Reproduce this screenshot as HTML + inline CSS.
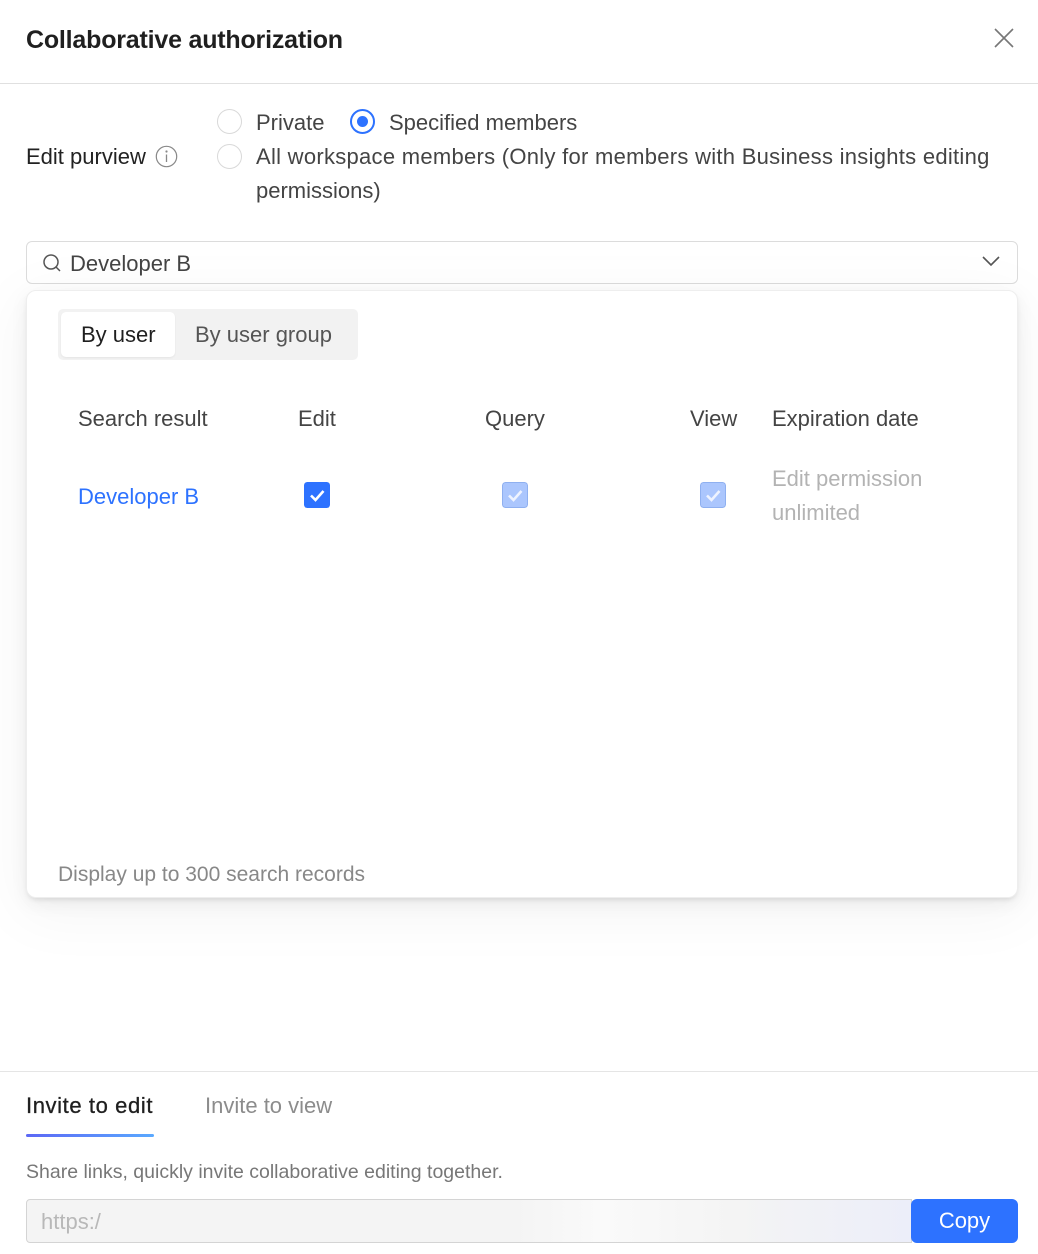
<!DOCTYPE html>
<html><head><meta charset="utf-8">
<style>
*{box-sizing:border-box;margin:0;padding:0}
body{width:1038px;height:1254px;background:#fff;font-family:"Liberation Sans",Arial,sans-serif;color:#333;position:relative;overflow:hidden}
.a{position:absolute;white-space:nowrap}
.t20{font-size:22px;line-height:24px}
.radio{position:absolute;width:25px;height:25px;border:1px solid #d9d9d9;border-radius:50%;background:#fff}
.radio.on{border:2px solid #2d72ff}
.radio.on::after{content:"";position:absolute;left:5px;top:5px;width:11px;height:11px;border-radius:50%;background:#2d72ff}
.cb{position:absolute;width:26px;height:26px;border-radius:3px}
</style></head><body>
<div class="a" style="left:26px;top:26px;font-size:25px;line-height:28px;font-weight:bold;color:#1f1f1f;letter-spacing:-0.2px">Collaborative authorization</div>
<svg class="a" style="left:993px;top:27px" width="22" height="22" viewBox="0 0 22 22"><path d="M2 2L20 20M20 2L2 20" stroke="#777" stroke-width="1.6" fill="none"/></svg>
<div class="a" style="left:0;top:83px;width:1038px;height:1px;background:#e0e0e0"></div>

<div class="a t20" style="left:26px;top:145px;color:#222">Edit purview</div>
<svg class="a" style="left:155px;top:145px" width="23" height="23" viewBox="0 0 23 23"><circle cx="11.5" cy="11.5" r="10.2" fill="none" stroke="#888" stroke-width="1.2"/><circle cx="11.5" cy="6.5" r="1.1" fill="#888"/><path d="M11.5 9.5V17" stroke="#888" stroke-width="1.3"/></svg>

<div class="radio" style="left:217px;top:109px"></div>
<div class="a t20" style="left:256px;top:111px;color:#444">Private</div>
<div class="radio on" style="left:350px;top:109px"></div>
<div class="a t20" style="left:389px;top:111px;color:#444">Specified members</div>
<div class="radio" style="left:217px;top:144px"></div>
<div class="a t20" style="left:256px;top:145px;color:#444;letter-spacing:0.28px">All workspace members (Only for members with Business insights editing</div>
<div class="a t20" style="left:256px;top:179px;color:#444">permissions)</div>

<div class="a" style="left:26px;top:241px;width:992px;height:43px;border:1px solid #dcdcdc;border-radius:6px;background:#fff"></div>
<svg class="a" style="left:42px;top:253px" width="20" height="20" viewBox="0 0 20 20"><circle cx="9" cy="9" r="7" fill="none" stroke="#555" stroke-width="1.5"/><path d="M14 14L18 18" stroke="#555" stroke-width="1.5"/></svg>
<div class="a t20" style="left:70px;top:252px;color:#444">Developer B</div>
<svg class="a" style="left:981px;top:254px" width="20" height="14" viewBox="0 0 20 14"><path d="M2 3L10 11L18 3" stroke="#555" stroke-width="1.6" fill="none"/></svg>

<div class="a" style="left:26px;top:290px;width:992px;height:608px;border-radius:10px;background:#fff;box-shadow:0 3px 6px -2px rgba(0,0,0,0.12),0 6px 18px 0 rgba(0,0,0,0.06),0 12px 60px 8px rgba(0,0,0,0.04);border:1px solid #eee"></div>
<div class="a" style="left:58px;top:309px;width:300px;height:51px;background:#f2f2f2;border-radius:5px"></div>
<div class="a" style="left:61px;top:312px;width:114px;height:45px;background:#fff;border-radius:5px;box-shadow:0 1px 2px rgba(0,0,0,0.06)"></div>
<div class="a t20" style="left:81px;top:323px;color:#1f1f1f">By user</div>
<div class="a t20" style="left:195px;top:323px;color:#555">By user group</div>

<div class="a t20" style="left:78px;top:407px;color:#444">Search result</div>
<div class="a t20" style="left:298px;top:407px;color:#444">Edit</div>
<div class="a t20" style="left:485px;top:407px;color:#444">Query</div>
<div class="a t20" style="left:690px;top:407px;color:#444">View</div>
<div class="a t20" style="left:772px;top:407px;color:#444">Expiration date</div>

<div class="a t20" style="left:78px;top:485px;color:#2d72ff">Developer B</div>
<svg class="cb" style="left:304px;top:482px" viewBox="0 0 26 26"><rect width="26" height="26" rx="3" fill="#2d72ff"/><path d="M7 13.5L11.5 18L19.5 9" stroke="#fff" stroke-width="2.6" fill="none"/></svg>
<svg class="cb" style="left:502px;top:482px" viewBox="0 0 26 26"><rect x="0.5" y="0.5" width="25" height="25" rx="3" fill="#abc6fd" stroke="#8fb0f0"/><path d="M7 13.5L11.5 18L19.5 9" stroke="#eef3ff" stroke-width="2.6" fill="none"/></svg>
<svg class="cb" style="left:700px;top:482px" viewBox="0 0 26 26"><rect x="0.5" y="0.5" width="25" height="25" rx="3" fill="#abc6fd" stroke="#8fb0f0"/><path d="M7 13.5L11.5 18L19.5 9" stroke="#eef3ff" stroke-width="2.6" fill="none"/></svg>
<div class="a t20" style="left:772px;top:467px;color:#b3b3b3">Edit permission</div>
<div class="a t20" style="left:772px;top:501px;color:#b3b3b3">unlimited</div>

<div class="a" style="left:58px;top:863px;font-size:21px;line-height:24px;color:#888">Display up to 300 search records</div>

<div class="a" style="left:0;top:1071px;width:1038px;height:1px;background:#e5e5e5"></div>
<div class="a t20" style="left:26px;top:1094px;color:#1f1f1f;letter-spacing:0.6px;-webkit-text-stroke:0.3px #1f1f1f">Invite to edit</div>
<div class="a t20" style="left:205px;top:1094px;color:#8c8c8c">Invite to view</div>
<div class="a" style="left:26px;top:1134px;width:128px;height:3px;border-radius:2px;background:linear-gradient(90deg,#5c68f5,#5aa9ff)"></div>
<div class="a" style="left:26px;top:1161px;font-size:19.5px;line-height:22px;color:#777">Share links, quickly invite collaborative editing together.</div>
<div class="a" style="left:26px;top:1199px;width:886px;height:44px;border:1px solid #d4d4d4;border-radius:4px 0 0 4px;background:linear-gradient(90deg,#f4f4f4 0%,#f4f4f4 55%,#fafafa 65%,#f4f4f4 80%,#eceef9 100%)"></div>
<div class="a t20" style="left:41px;top:1210px;color:#b8b8b8">https:/</div>
<div class="a" style="left:911px;top:1199px;width:107px;height:44px;background:#2d72ff;border-radius:6px;color:#fff;font-size:22px;line-height:44px;text-align:center">Copy</div>
</body></html>
